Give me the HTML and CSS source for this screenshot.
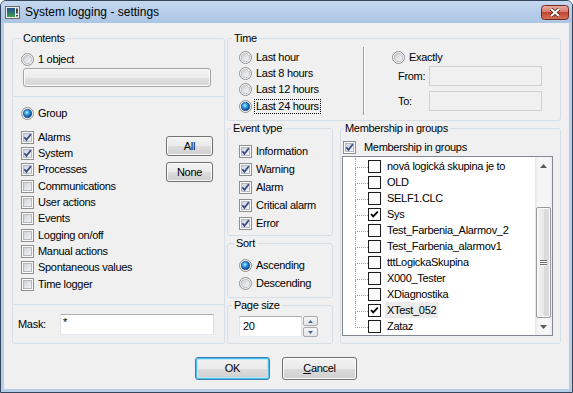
FILE: index.html
```html
<!DOCTYPE html>
<html>
<head>
<meta charset="utf-8">
<title>System logging - settings</title>
<link rel="stylesheet" href="styles.css">
</head>
<body>
<svg class="defs" width="0" height="0" aria-hidden="true">
  <defs>
    <linearGradient id="g-cb" x1="0" y1="0" x2="1" y2="1">
      <stop offset="0" stop-color="#cdd1d7"/>
      <stop offset="1" stop-color="#f6f6f6"/>
    </linearGradient>
    <linearGradient id="g-rb" x1="0" y1="0" x2="1" y2="1">
      <stop offset="0" stop-color="#c9cdd2"/>
      <stop offset="1" stop-color="#f8f8f8"/>
    </linearGradient>
    <radialGradient id="g-rbon" cx="0.42" cy="0.38" r="0.7">
      <stop offset="0" stop-color="#c4f0ff"/>
      <stop offset="0.3" stop-color="#45aef0"/>
      <stop offset="0.7" stop-color="#1660ac"/>
      <stop offset="1" stop-color="#0b3a74"/>
    </radialGradient>
    <linearGradient id="g-ico" x1="0" y1="0" x2="0" y2="1">
      <stop offset="0" stop-color="#24508a"/>
      <stop offset="0.6" stop-color="#2f7b6c"/>
      <stop offset="1" stop-color="#45a548"/>
    </linearGradient>
    <linearGradient id="g-close" x1="0" y1="0" x2="0" y2="1">
      <stop offset="0" stop-color="#eab0a6"/>
      <stop offset="0.45" stop-color="#d77b6b"/>
      <stop offset="0.5" stop-color="#c24631"/>
      <stop offset="1" stop-color="#d8715a"/>
    </linearGradient>
    <symbol id="cb-off" viewBox="0 0 13 13">
      <rect x="0.5" y="0.5" width="12" height="12" fill="#fbfbfb" stroke="#8e8f8f"/>
      <rect x="2.5" y="2.5" width="8" height="8" fill="url(#g-cb)" stroke="#b5b9bf"/>
    </symbol>
    <symbol id="cb-on" viewBox="0 0 13 13">
      <use href="#cb-off"/>
      <path d="M3.3 6.3 L5.4 8.9 L9.8 3.3" fill="none" stroke="#33478a" stroke-width="1.7"/>
    </symbol>
    <symbol id="rb-off" viewBox="0 0 13 13">
      <circle cx="6.5" cy="6.5" r="6" fill="#f6f6f6" stroke="#8e8f8f"/>
      <circle cx="6.5" cy="6.5" r="4.1" fill="url(#g-rb)" stroke="#b3b7bd" stroke-width="0.8"/>
    </symbol>
    <symbol id="rb-on" viewBox="0 0 13 13">
      <circle cx="6.5" cy="6.5" r="6" fill="#f6f6f6" stroke="#8e8f8f"/>
      <circle cx="6.5" cy="6.5" r="4.1" fill="url(#g-rbon)" stroke="#1d4778" stroke-width="0.8"/>
    </symbol>
    <symbol id="tc-off" viewBox="0 0 13 13">
      <rect x="0.5" y="0.5" width="12" height="12" fill="#fff" stroke="#1c1c1c"/>
    </symbol>
    <symbol id="tc-on" viewBox="0 0 13 13">
      <rect x="0.5" y="0.5" width="12" height="12" fill="#fff" stroke="#1c1c1c"/>
      <path d="M3 6 L5.2 8.4 L9.8 3.6" fill="none" stroke="#000" stroke-width="1.8"/>
    </symbol>
  </defs>
</svg>

<div class="window">
  <div class="titlebar">
    <svg class="appicon" width="15" height="13" viewBox="0 0 15 13">
      <rect x="0.5" y="0.5" width="14" height="12" fill="#ececec" stroke="#6a6a6a"/>
      <rect x="2" y="2" width="8" height="9" fill="url(#g-ico)"/>
      <rect x="11.2" y="2.5" width="1.5" height="5" fill="#111"/>
      <rect x="11.2" y="9" width="1.5" height="1.5" fill="#111"/>
    </svg>
    <span class="title">System logging - settings</span>
    <svg class="close" width="28" height="15" viewBox="0 0 28 15">
      <rect x="0.5" y="0.5" width="27" height="14" rx="3" fill="url(#g-close)" stroke="#6c2c22"/>
      <path d="M10 4 L18 11 M18 4 L10 11" stroke="#4d1f18" stroke-width="3.6"/>
      <path d="M10 4 L18 11 M18 4 L10 11" stroke="#fff" stroke-width="2"/>
    </svg>
  </div>

  <div class="client">
    <div class="main">
      <fieldset class="box contents">
        <legend>Contents</legend>
        <div class="sec sec-obj">
          <label class="opt"><svg class="ic"><use href="#rb-off"/></svg><span>1 object</span></label>
          <div class="objbar"></div>
        </div>
        <div class="sec sec-group">
          <label class="opt"><svg class="ic"><use href="#rb-on"/></svg><span>Group</span></label>
          <div class="grouprow">
            <div class="cblist">
              <label class="opt r16"><svg class="ic"><use href="#cb-on"/></svg><span>Alarms</span></label>
              <label class="opt r16"><svg class="ic"><use href="#cb-on"/></svg><span>System</span></label>
              <label class="opt r16"><svg class="ic"><use href="#cb-on"/></svg><span>Processes</span></label>
              <label class="opt r16"><svg class="ic"><use href="#cb-off"/></svg><span>Communications</span></label>
              <label class="opt r16"><svg class="ic"><use href="#cb-off"/></svg><span>User actions</span></label>
              <label class="opt r16"><svg class="ic"><use href="#cb-off"/></svg><span>Events</span></label>
              <label class="opt r16"><svg class="ic"><use href="#cb-off"/></svg><span>Logging on/off</span></label>
              <label class="opt r16"><svg class="ic"><use href="#cb-off"/></svg><span>Manual actions</span></label>
              <label class="opt r16"><svg class="ic"><use href="#cb-off"/></svg><span>Spontaneous values</span></label>
              <label class="opt r16"><svg class="ic"><use href="#cb-off"/></svg><span>Time logger</span></label>
            </div>
            <div class="btncol">
              <button class="btn small">All</button>
              <button class="btn small">None</button>
            </div>
          </div>
        </div>
        <div class="sec sec-mask">
          <span class="masklabel">Mask:</span>
          <div class="textbox mask">*</div>
        </div>
      </fieldset>

      <div class="rightcol">
        <fieldset class="box time">
          <legend>Time</legend>
          <div class="time-body">
            <div class="time-left">
              <label class="opt r16"><svg class="ic"><use href="#rb-off"/></svg><span>Last hour</span></label>
              <label class="opt r16"><svg class="ic"><use href="#rb-off"/></svg><span>Last 8 hours</span></label>
              <label class="opt r16"><svg class="ic"><use href="#rb-off"/></svg><span>Last 12 hours</span></label>
              <label class="opt r16"><svg class="ic"><use href="#rb-on"/></svg><span class="focus">Last 24 hours</span></label>
            </div>
            <div class="vsep"></div>
            <div class="time-right">
              <label class="opt r16"><svg class="ic"><use href="#rb-off"/></svg><span>Exactly</span></label>
              <div class="frow from"><span class="flabel">From:</span><span class="field"></span></div>
              <div class="frow to"><span class="flabel">To:</span><span class="field"></span></div>
            </div>
          </div>
        </fieldset>

        <div class="lower">
          <div class="midcol">
            <fieldset class="box evt">
              <legend>Event type</legend>
              <div class="evt-body">
                <label class="opt r18"><svg class="ic"><use href="#cb-on"/></svg><span>Information</span></label>
                <label class="opt r18"><svg class="ic"><use href="#cb-on"/></svg><span>Warning</span></label>
                <label class="opt r18"><svg class="ic"><use href="#cb-on"/></svg><span>Alarm</span></label>
                <label class="opt r18"><svg class="ic"><use href="#cb-on"/></svg><span>Critical alarm</span></label>
                <label class="opt r18"><svg class="ic"><use href="#cb-on"/></svg><span>Error</span></label>
              </div>
            </fieldset>
            <fieldset class="box sort">
              <legend>Sort</legend>
              <div class="sort-body">
                <label class="opt r18"><svg class="ic"><use href="#rb-on"/></svg><span>Ascending</span></label>
                <label class="opt r18"><svg class="ic"><use href="#rb-off"/></svg><span>Descending</span></label>
              </div>
            </fieldset>
            <fieldset class="box psize">
              <legend>Page size</legend>
              <div class="psize-body">
                <div class="textbox pagesize">20</div>
                <div class="spin">
                  <span class="spin-btn"><svg width="5" height="3" viewBox="0 0 5 3"><path d="M0 3 L2.5 0 L5 3 Z" fill="#4a6591"/></svg></span>
                  <span class="spin-btn"><svg width="5" height="3" viewBox="0 0 5 3"><path d="M0 0 L2.5 3 L5 0 Z" fill="#4a6591"/></svg></span>
                </div>
              </div>
            </fieldset>
          </div>

          <fieldset class="box member">
            <legend>Membership in groups</legend>
            <label class="opt memcheck"><svg class="ic"><use href="#cb-on"/></svg><span>Membership in groups</span></label>
            <div class="tree">
              <div class="tree-items">
                <div class="trow"><span class="br"></span><svg class="ic"><use href="#tc-off"/></svg><span class="tlabel">nová logická skupina je to</span></div>
                <div class="trow"><span class="br"></span><svg class="ic"><use href="#tc-off"/></svg><span class="tlabel">OLD</span></div>
                <div class="trow"><span class="br"></span><svg class="ic"><use href="#tc-off"/></svg><span class="tlabel">SELF1.CLC</span></div>
                <div class="trow"><span class="br"></span><svg class="ic"><use href="#tc-on"/></svg><span class="tlabel">Sys</span></div>
                <div class="trow"><span class="br"></span><svg class="ic"><use href="#tc-off"/></svg><span class="tlabel">Test_Farbenia_Alarmov_2</span></div>
                <div class="trow"><span class="br"></span><svg class="ic"><use href="#tc-off"/></svg><span class="tlabel">Test_Farbenia_alarmov1</span></div>
                <div class="trow"><span class="br"></span><svg class="ic"><use href="#tc-off"/></svg><span class="tlabel">tttLogickaSkupina</span></div>
                <div class="trow"><span class="br"></span><svg class="ic"><use href="#tc-off"/></svg><span class="tlabel">X000_Tester</span></div>
                <div class="trow"><span class="br"></span><svg class="ic"><use href="#tc-off"/></svg><span class="tlabel">XDiagnostika</span></div>
                <div class="trow"><span class="br"></span><svg class="ic"><use href="#tc-on"/></svg><span class="tlabel selected">XTest_052</span></div>
                <div class="trow last"><span class="br"></span><svg class="ic"><use href="#tc-off"/></svg><span class="tlabel">Zataz</span></div>
              </div>
              <div class="sb">
                <div class="sb-btn"><svg width="7" height="4" viewBox="0 0 7 4"><path d="M0 4 L3.5 0 L7 4 Z" fill="#5a5a5a"/></svg></div>
                <div class="sb-track"><div class="sb-thumb"><span class="grip"></span></div></div>
                <div class="sb-btn"><svg width="7" height="4" viewBox="0 0 7 4"><path d="M0 0 L3.5 4 L7 0 Z" fill="#5a5a5a"/></svg></div>
              </div>
            </div>
          </fieldset>
        </div>
      </div>
    </div>

    <div class="buttons">
      <button class="btn big default">OK</button>
      <button class="btn big"><u>C</u>ancel</button>
    </div>
  </div>
</div>
</body>
</html>
```

FILE: styles.css
```css
* { box-sizing: border-box; }
html, body { margin: 0; padding: 0; }
body {
  font: 11px/13px "Liberation Sans", Arial, sans-serif;
  letter-spacing: -0.3px;
  color: #000;
  background: #fff;
}
.defs { display: block; width: 0; height: 0; overflow: hidden; }

.window {
  width: 573px;
  height: 393px;
  border: 1px solid #34465c;
  border-radius: 6px 6px 0 0;
  background: #b7cde8;
  display: flex;
  flex-direction: column;
  overflow: hidden;
}
.titlebar {
  height: 22px;
  flex: none;
  display: flex;
  align-items: center;
  padding: 0 3px 0 4px;
  background: linear-gradient(#c4d8ef, #abc5e4);
}
.appicon { display: block; flex: none; }
.title {
  margin-left: 5px;
  font-size: 12px;
  letter-spacing: 0;
  color: #000;
}
.close { display: block; margin-left: auto; flex: none; }

.client {
  flex: 1;
  margin: 0 3px 3px 3px;
  background: #f0f0f0;
  padding: 8px 8px 0 8px;
}
.main {
  display: flex;
  gap: 2px;
  height: 313px;
}

.box {
  margin: 0;
  padding: 0;
  min-width: 0;
  border: 1px solid #d5dfe5;
  border-radius: 3px;
}
.box legend {
  padding: 0 2px;
  height: 14px;
  line-height: 14px;
}

.ic { display: block; width: 13px; height: 13px; flex: none; }
.opt { display: flex; align-items: center; gap: 4px; height: 14px; }
.opt.r16 { height: 16.33px; }
.opt.r18 { height: 18px; }

/* Contents */
.contents { width: 213px; }
.contents legend { margin-left: 8px; }
.sec-obj {
  height: 52px;
  border-bottom: 1px solid #d5dfe5;
  padding: 7px 0 0 8px;
}
.objbar {
  margin: 2px 0 0 2px;
  width: 188px;
  height: 19px;
  border: 1px solid #a3a3a3;
  border-radius: 3px;
  background: linear-gradient(#f3f3f3, #ececec 50%, #e0e0e0 50%, #d6d6d6);
  box-shadow: inset 0 0 0 1px #fafafa;
}
.sec-group {
  height: 208px;
  border-bottom: 1px solid #d5dfe5;
  padding: 9px 11px 0 8px;
}
.grouprow {
  display: flex;
  justify-content: space-between;
  margin-top: 9px;
}
.cblist { display: flex; flex-direction: column; }
.btncol {
  display: flex;
  flex-direction: column;
  gap: 6px;
  margin-top: 7px;
}
.sec-mask {
  height: 38px;
  padding: 9px 0 0 5px;
  display: flex;
  align-items: flex-start;
}
.masklabel { width: 42px; line-height: 21px; }

.textbox {
  height: 21px;
  border: 1px solid;
  border-color: #abadb3 #dbdfe6 #e3e9ef #e2e3ea;
  background: #fff;
  padding: 0 3px;
  line-height: 19px;
}
.mask { width: 154px; padding-left: 2px; line-height: 15px; }

/* Buttons */
.btn {
  font: inherit;
  letter-spacing: inherit;
  color: #000;
  padding: 0;
  border: 1px solid #707070;
  border-radius: 3px;
  background: linear-gradient(#f2f2f2, #ebebeb 50%, #dddddd 50%, #cfcfcf);
  box-shadow: inset 0 0 0 1px #fbfbfb;
  text-align: center;
}
.btn.small { width: 47px; height: 20px; }
.btn.big { width: 75px; height: 23px; }
.btn.default {
  border-color: #3c7fb1;
  box-shadow: inset 0 0 0 1px #4ec0ef, inset 0 0 0 2px #b9e5f8;
}
.btn u { text-decoration: underline; }

/* Right column */
.rightcol {
  width: 334px;
  display: flex;
  flex-direction: column;
}
.time { height: 90px; flex: none; }
.time legend { margin-left: 4px; }
.time-body {
  display: flex;
  padding: 2px 0 0 11px;
}
.time-left { width: 124px; padding-top: 2px; }
.focus {
  margin-left: -1px;
  padding: 0 1px;
  line-height: 13px;
  outline: 1px dotted #000;
}
.vsep {
  width: 2px;
  height: 68px;
  border-left: 1px solid #a0a0a0;
  border-right: 1px solid #ffffff;
}
.time-right { padding: 2px 0 0 27px; }
.frow { display: flex; align-items: center; margin-left: 6px; }
.frow.from { margin-top: 1px; }
.frow.to { margin-top: 5px; }
.flabel { width: 31px; }
.field {
  width: 113px;
  height: 20px;
  border: 1px solid #cdd1d6;
  background: #f0f0f0;
}

.lower {
  display: flex;
  gap: 7px;
  flex: 1;
}
.midcol {
  width: 106px;
  display: flex;
  flex-direction: column;
}
.evt { height: 115px; flex: none; }
.evt legend { margin-left: 3px; }
.evt-body { padding: 7px 0 0 11px; }
.sort { height: 62px; flex: none; }
.sort legend { margin-left: 6px; }
.sort-body { padding: 6px 0 0 11px; }
.psize { height: 46px; flex: none; }
.psize legend { margin-left: 4px; }
.psize-body {
  display: flex;
  padding: 4px 0 0 11px;
}
.pagesize { width: 63px; }
.spin {
  display: flex;
  flex-direction: column;
  gap: 1px;
  margin-left: 1px;
}
.spin-btn {
  width: 15px;
  height: 10px;
  border: 1px solid #a7abb0;
  border-radius: 2px;
  background: linear-gradient(#f6f6f6, #e4e4e4);
  display: flex;
  align-items: center;
  justify-content: center;
}
.spin-btn svg { display: block; }

/* Membership */
.member { width: 221px; }
.member legend { margin-left: 2px; }
.memcheck {
  margin: 5px 0 0 2px;
  gap: 8px;
}
.tree {
  margin: 2px 0 0 1px;
  width: 211px;
  height: 180px;
  border: 1px solid #828790;
  background: #fff;
  display: flex;
}
.tree-items {
  flex: 1;
  padding-top: 1px;
}
.trow {
  display: flex;
  align-items: center;
  height: 16px;
  padding-left: 12px;
}
.br {
  width: 13px;
  height: 16px;
  flex: none;
  display: flex;
  flex-direction: column;
}
.br::before {
  content: "";
  height: 9px;
  border-left: 1px dotted #a0a0a0;
  border-bottom: 1px dotted #a0a0a0;
}
.br::after {
  content: "";
  flex: 1;
  border-left: 1px dotted #a0a0a0;
}
.trow.last .br::after { border-left: 0; }
.tlabel {
  margin-left: 4px;
  padding: 0 2px;
  line-height: 16px;
  white-space: nowrap;
}
.tlabel.selected { background: #ececec; }

.sb {
  width: 17px;
  flex: none;
  display: flex;
  flex-direction: column;
  background: linear-gradient(to right, #e6e6e6, #f6f6f6 20%, #f6f6f6 80%, #ececec);
}
.sb-btn {
  height: 17px;
  display: flex;
  align-items: center;
  justify-content: center;
}
.sb-btn svg { display: block; }
.sb-track { flex: 1; padding-top: 33px; }
.sb-thumb {
  margin: 0 auto;
  width: 15px;
  height: 111px;
  border: 1px solid #9a9a9a;
  border-radius: 2px;
  background: linear-gradient(to right, #f4f4f4, #e8e8e8 50%, #d9d9d9 50%, #dcdcdc);
  box-shadow: inset 0 0 0 1px #fafafa;
  display: flex;
  align-items: center;
  justify-content: center;
}
.grip {
  width: 7px;
  height: 6px;
  background: repeating-linear-gradient(#6e6e6e 0 1px, #f6f6f6 1px 2px);
}

.buttons {
  display: flex;
  gap: 12px;
  padding-left: 183px;
  margin-top: 13px;
}
```
